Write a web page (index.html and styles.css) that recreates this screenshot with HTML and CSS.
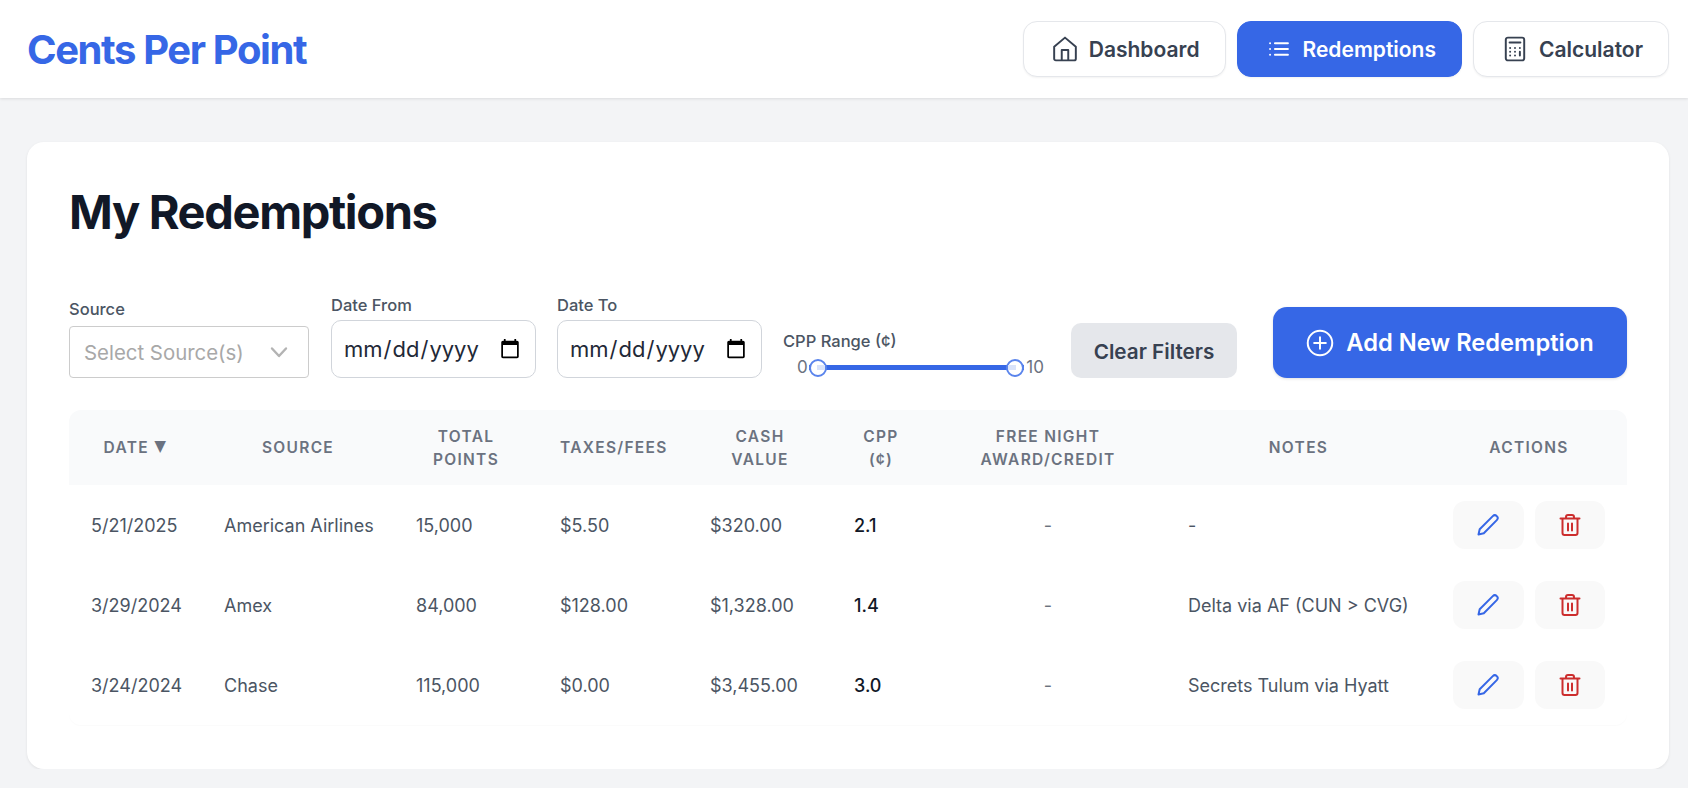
FILE: index.html
```html
<!DOCTYPE html>
<html lang="en">
<head>
    <meta charset="UTF-8">
    <meta name="viewport" content="width=device-width, initial-scale=1.0">
    <title>Cents Per Point</title>
    <link rel="stylesheet" href="styles.css">
</head>
<body>
    <header class="topbar">
        <div class="logo">Cents Per Point</div>
        <nav class="nav">
            <a class="nav-btn" href="#">
                <svg class="nav-icon" viewBox="0 0 24 24"><path d="M2 10 12 1.500 22 10v11a1.500 1.500 0 0 1-1.500 1.500h-17A1.500 1.500 0 0 1 2 21zM9 22.500V13h6v9.500"/></svg>
                Dashboard
            </a>
            <a class="nav-btn active" href="#">
                <svg class="nav-icon" viewBox="0 0 24 24"><path d="M8.250 6.750h12M8.250 12h12M8.250 17.250h12M3.750 6.750h.01M3.750 12h.01M3.750 17.250h.01"/></svg>
                Redemptions
            </a>
            <a class="nav-btn" href="#">
                <svg class="nav-icon" viewBox="0 0 24 24"><rect x="3.500" y="1.500" width="17" height="21" rx="2"/><path d="M7 6h10M7.500 11h.01M12 11h.01M16.500 11h.01M7.500 14.500h.01M12 14.500h.01M7.500 18h.01M12 18h.01M16.500 14.500V18"/></svg>
                Calculator
            </a>
        </nav>
    </header>

    <main class="card">
        <h1 class="title">My Redemptions</h1>

        <div class="filters">
            <div class="field field-source">
                <label class="field-label">Source</label>
                <div class="select">
                    <span>Select Source(s)</span>
                    <svg class="chevron" viewBox="0 0 20 20"><path d="M3 6.500 10 14l7-7.500"/></svg>
                </div>
            </div>
            <div class="field field-date">
                <label class="field-label">Date From</label>
                <input class="date" type="date">
            </div>
            <div class="field field-date">
                <label class="field-label">Date To</label>
                <input class="date" type="date">
            </div>
            <div class="field field-range">
                <label class="field-label">CPP Range (¢)</label>
                <div class="range">
                    <span class="range-end">0</span>
                    <div class="track">
                        <span class="thumb thumb-min"></span>
                        <span class="thumb thumb-max"></span>
                    </div>
                    <span class="range-end">10</span>
                </div>
            </div>
            <button class="btn-clear">Clear Filters</button>
            <button class="btn-add">
                <svg class="add-icon" viewBox="0 0 24 24"><circle cx="12" cy="12" r="10.500"/><path d="M12 7v10M7 12h10"/></svg>
                Add New Redemption
            </button>
        </div>

        <div class="table-wrap">
            <table class="table">
                <colgroup>
                    <col class="c-date"><col class="c-source"><col class="c-points"><col class="c-taxes"><col class="c-cash"><col class="c-cpp"><col class="c-free"><col class="c-notes"><col class="c-actions">
                </colgroup>
                <thead>
                    <tr>
                        <th>Date <span class="sort">▼</span></th>
                        <th>Source</th>
                        <th>Total Points</th>
                        <th>Taxes/Fees</th>
                        <th>Cash Value</th>
                        <th>CPP (¢)</th>
                        <th>Free Night Award/Credit</th>
                        <th>Notes</th>
                        <th>Actions</th>
                    </tr>
                </thead>
                <tbody>
                    <tr>
                        <td>5/21/2025</td>
                        <td>American Airlines</td>
                        <td>15,000</td>
                        <td>$5.50</td>
                        <td>$320.00</td>
                        <td class="cpp">2.1</td>
                        <td class="free">-</td>
                        <td>-</td>
                        <td>
                            <div class="actions">
                                <button class="icon-btn edit"><svg viewBox="0 0 24 24"><path d="M2.500 21.500l1.200-5.300L16.800 3.100a2.700 2.700 0 0 1 4 4L7.800 20.300z"/></svg></button>
                                <button class="icon-btn del"><svg viewBox="0 0 24 24"><path d="M2.500 5.500h19M8 5.500V4a2 2 0 0 1 2-2h4a2 2 0 0 1 2 2v1.500M4.500 5.500V20a2 2 0 0 0 2 2h11a2 2 0 0 0 2-2V5.500M10 10.500v7M14 10.500v7"/></svg></button>
                            </div>
                        </td>
                    </tr>
                    <tr>
                        <td>3/29/2024</td>
                        <td>Amex</td>
                        <td>84,000</td>
                        <td>$128.00</td>
                        <td>$1,328.00</td>
                        <td class="cpp">1.4</td>
                        <td class="free">-</td>
                        <td>Delta via AF (CUN &gt; CVG)</td>
                        <td>
                            <div class="actions">
                                <button class="icon-btn edit"><svg viewBox="0 0 24 24"><path d="M2.500 21.500l1.200-5.300L16.800 3.100a2.700 2.700 0 0 1 4 4L7.800 20.300z"/></svg></button>
                                <button class="icon-btn del"><svg viewBox="0 0 24 24"><path d="M2.500 5.500h19M8 5.500V4a2 2 0 0 1 2-2h4a2 2 0 0 1 2 2v1.500M4.500 5.500V20a2 2 0 0 0 2 2h11a2 2 0 0 0 2-2V5.500M10 10.500v7M14 10.500v7"/></svg></button>
                            </div>
                        </td>
                    </tr>
                    <tr>
                        <td>3/24/2024</td>
                        <td>Chase</td>
                        <td>115,000</td>
                        <td>$0.00</td>
                        <td>$3,455.00</td>
                        <td class="cpp">3.0</td>
                        <td class="free">-</td>
                        <td>Secrets Tulum via Hyatt</td>
                        <td>
                            <div class="actions">
                                <button class="icon-btn edit"><svg viewBox="0 0 24 24"><path d="M2.500 21.500l1.200-5.300L16.800 3.100a2.700 2.700 0 0 1 4 4L7.800 20.300z"/></svg></button>
                                <button class="icon-btn del"><svg viewBox="0 0 24 24"><path d="M2.500 5.500h19M8 5.500V4a2 2 0 0 1 2-2h4a2 2 0 0 1 2 2v1.500M4.500 5.500V20a2 2 0 0 0 2 2h11a2 2 0 0 0 2-2V5.500M10 10.500v7M14 10.500v7"/></svg></button>
                            </div>
                        </td>
                    </tr>
                </tbody>
            </table>
        </div>
    </main>
</body>
</html>
```

FILE: styles.css
```css
* {
    margin: 0;
    padding: 0;
    box-sizing: border-box;
}

body {
    background: #f3f4f6;
    font-family: Inter, "Liberation Sans", sans-serif;
    color: #374151;
    overflow: hidden;
}

svg {
    fill: none;
    stroke: currentColor;
    stroke-linecap: round;
    stroke-linejoin: round;
}

.topbar {
    height: 98px;
    background: #fff;
    padding: 0 19px 0 27px;
    display: flex;
    align-items: center;
    justify-content: space-between;
    box-shadow: 0 1px 3px rgba(0, 0, 0, 0.1);
}

.logo {
    padding-top: 1px;
    font-size: 40px;
    font-weight: 700;
    letter-spacing: -1.400px;
    color: #3667e6;
}

.nav {
    display: flex;
    gap: 11px;
}

.nav-btn {
    height: 56px;
    padding: 0 25px 0 28px;
    display: flex;
    align-items: center;
    gap: 11px;
    background: #fff;
    border: 1px solid #e5e7eb;
    border-radius: 14px;
    box-shadow: 0 1px 2px rgba(0, 0, 0, 0.05);
    color: #374151;
    font-size: 21px;
    font-weight: 600;
    text-decoration: none;
}

.nav-btn.active {
    background: #3667e6;
    border-color: #3667e6;
    color: #fff;
}

.nav-icon {
    width: 26px;
    height: 26px;
    stroke-width: 1.800;
}

.card {
    margin: 44px 19px 0 27px;
    height: 627px;
    padding: 42px;
    background: #fff;
    border-radius: 17px;
    box-shadow: 0 1px 3px rgba(0, 0, 0, 0.08);
}

.title {
    font-size: 47px;
    line-height: 56px;
    font-weight: 700;
    letter-spacing: -1.350px;
    color: #111827;
}

.filters {
    margin-top: 56px;
    display: flex;
    align-items: flex-end;
}

.field {
    display: flex;
    flex-direction: column;
}

.field-label {
    font-size: 16.500px;
    line-height: 19px;
    font-weight: 500;
    color: #4b5563;
    margin-bottom: 7px;
}

.field-source {
    width: 240px;
    margin-right: 22px;
}

.select {
    height: 52px;
    padding: 0 19px 0 14px;
    display: flex;
    align-items: center;
    justify-content: space-between;
    border: 1px solid #cccccc;
    border-radius: 4px;
    font-size: 20.400px;
    color: #a8a8a8;
}

.chevron {
    width: 20px;
    height: 20px;
    stroke: #b3b3b3;
    stroke-width: 2.400;
}

.field-date {
    width: 205px;
    margin-right: 21px;
}

.field-date .field-label {
    margin-bottom: 5px;
}

.date {
    height: 58px;
    padding: 0 12px 0 11px;
    border: 1px solid #d1d5db;
    border-radius: 10px;
    background: #fff;
    font-family: inherit;
    font-size: 22px;
    color: #1f2937;
}

.field-range {
    width: 261px;
    margin-right: 27px;
}

.field-range .field-label {
    margin-bottom: 5px;
}

.range {
    height: 22px;
    display: flex;
    align-items: center;
    font-size: 17px;
    color: #6b7280;
    padding-left: 14px;
}

.track {
    position: relative;
    width: 216px;
    height: 5px;
    margin: 0 2px 0 1px;
    background: #3667e6;
}

.thumb {
    position: absolute;
    top: -6px;
    width: 18px;
    height: 18px;
    border: 2px solid #5a84ec;
    border-radius: 50%;
    background: #fff;
}

.thumb::after {
    content: "";
    position: absolute;
    top: 4px;
    width: 8px;
    height: 5px;
    background: #d9e3fa;
}

.thumb-min {
    left: 0;
}

.thumb-min::after {
    right: 0;
}

.thumb-max {
    right: 0;
}

.thumb-max::after {
    left: 0;
}

.btn-clear {
    width: 166px;
    height: 55px;
    margin-right: 36px;
    padding-top: 2px;
    border: none;
    border-radius: 10px;
    background: #e5e7eb;
    color: #374151;
    font-family: inherit;
    font-size: 20.700px;
    font-weight: 600;
}

.btn-add {
    width: 354px;
    height: 71px;
    display: flex;
    align-items: center;
    justify-content: center;
    gap: 12px;
    border: none;
    border-radius: 14px;
    background: #3667e6;
    color: #fff;
    font-family: inherit;
    font-size: 23.700px;
    font-weight: 600;
    box-shadow: 0 1px 3px rgba(0, 0, 0, 0.12);
}

.add-icon {
    width: 28px;
    height: 28px;
    stroke-width: 1.700;
}

.table-wrap {
    margin-top: 32px;
    border-radius: 12px;
    overflow: hidden;
    box-shadow: 0 1px 1px rgba(0, 0, 0, 0.02);
}

.table {
    width: 100%;
    border-collapse: collapse;
    table-layout: fixed;
}

.c-date { width: 133px; }
.c-source { width: 192px; }
.c-points { width: 144px; }
.c-taxes { width: 150px; }
.c-cash { width: 144px; }
.c-cpp { width: 98px; }
.c-free { width: 236px; }
.c-notes { width: 265px; }

.table th {
    height: 75px;
    padding: 0 22px;
    background: #f9fafb;
    color: #6b7280;
    font-size: 15.500px;
    line-height: 23px;
    font-weight: 600;
    letter-spacing: 1.300px;
    text-align: center;
    text-transform: uppercase;
}

.sort {
    display: inline-block;
    margin: 0 -2px;
    transform: scaleX(0.8);
}

.table td {
    height: 80px;
    padding: 0 22px;
    font-size: 18px;
    color: #4b5563;
    white-space: nowrap;
}

.table td.cpp {
    font-weight: 500;
    color: #111827;
}

.table td.free {
    text-align: center;
    color: #6b7280;
}

.actions {
    display: flex;
    gap: 11px;
}

.icon-btn {
    width: 71px;
    height: 48px;
    border: none;
    border-radius: 12px;
    background: #f9f9f9;
    display: flex;
    align-items: center;
    justify-content: center;
}

.icon-btn svg {
    width: 24px;
    height: 24px;
    stroke-width: 2;
}

.edit {
    color: #3667e6;
}

.del {
    color: #cc2e2e;
}
```
